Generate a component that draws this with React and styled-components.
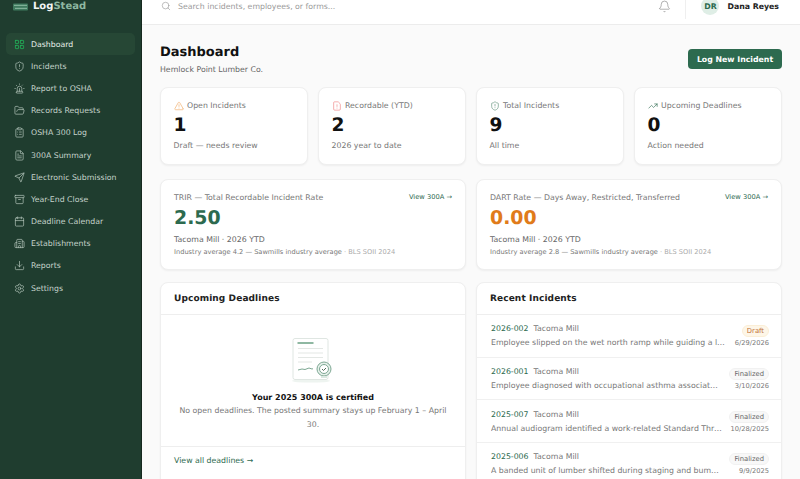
import React from "react";
import styled, { createGlobalStyle } from "styled-components";
import {
  LayoutGrid, ShieldAlert, Siren, FolderOpen, ClipboardList, FileText, Send, Archive,
  Calendar, Building2, Download, Settings, Search, Bell, TriangleAlert, FileWarning, TrendingUp,
} from "lucide-react";

const Global = createGlobalStyle`
  html, body { margin: 0; padding: 0; height: 100%; overflow: hidden; }
  body { font-family: "DejaVu Sans", sans-serif; background: #fafafa; color: #111; text-rendering: geometricPrecision; }
  * { box-sizing: border-box; }
`;

const Shell = styled.div`
  display: flex;
  width: 800px;
  height: 479px;
  overflow: hidden;
`;
const Sidebar = styled.aside`
  width: 142px;
  flex: none;
  background: #1f3d2f;
  border-right: 1px solid #16291f;
  display: flex;
  flex-direction: column;
`;
const Brand = styled.div`
  height: 25px;
  padding: 0 13px 12px;
  display: flex;
  align-items: center;
  gap: 5px;
  font-size: 10px;
  font-weight: 700;
  color: #f3f6f4;
`;
const BrandAccent = styled.span`
  color: #8fb8a2;
`;
const Nav = styled.nav`
  display: flex;
  flex-direction: column;
  padding: 8px 6px;
  gap: 0;
`;
const NavItem = styled.a`
  height: 22.2px;
  display: flex;
  align-items: center;
  gap: 6px;
  padding: 0 8px;
  border-radius: 5px;
  font-size: 7.8px;
  white-space: nowrap;
  color: ${(p) => (p.$active ? "#e6efe9" : "#c5d3cb")};
  background: ${(p) => (p.$active ? "#264735" : "transparent")};
  svg { color: ${(p) => (p.$active ? "#22c55e" : "#b6c7bd")}; flex: none; }
`;
const Main = styled.div`
  flex: 1;
  min-width: 0;
  display: flex;
  flex-direction: column;
`;
const Topbar = styled.header`
  height: 25px;
  flex: none;
  background: #fff;
  border-bottom: 1px solid #ececec;
  display: flex;
  align-items: center;
  padding: 0 21px 12px 19px;
  overflow: hidden;
  svg { flex: none; }
`;
const SearchText = styled.div`
  margin-left: 7px;
  flex: 1;
  font-size: 7.8px;
  color: #9a9a9a;
`;
const Divider = styled.div`
  width: 1px;
  height: 26px;
  background: #efefef;
  margin: 0 15px 0 14px;
`;
const Avatar = styled.div`
  width: 18px;
  height: 18px;
  border-radius: 50%;
  background: #dfeee6;
  color: #2d6a4f;
  font-size: 7.8px;
  font-weight: 700;
  display: flex;
  align-items: center;
  justify-content: center;
`;
const UserName = styled.div`
  margin-left: 8px;
  font-size: 7.8px;
  font-weight: 700;
  color: #222;
`;
const Content = styled.main`
  padding: 12px 18px 0;
  display: flex;
  flex-direction: column;
`;
const PageHead = styled.div`
  display: flex;
  justify-content: space-between;
  align-items: center;
  height: 44px;
  margin-bottom: 6px;
`;
const PageTitle = styled.h1`
  margin: 0 0 2px;
  font-size: 13px;
  line-height: 18px;
  font-weight: 700;
  color: #111;
`;
const PageSub = styled.div`
  font-size: 7.8px;
  line-height: 11px;
  color: #666;
`;
const PrimaryButton = styled.button`
  border: 0;
  height: 20px;
  width: 94px;
  border-radius: 4px;
  background: #2d6a4f;
  color: #fff;
  font: 700 7.8px "DejaVu Sans", sans-serif;
  padding: 0;
`;
const Stats = styled.div`
  display: grid;
  grid-template-columns: repeat(4, 148px);
  gap: 10px;
  margin-bottom: 14px;
`;
const Card = styled.section`
  background: #fff;
  border: 1px solid #efefef;
  border-radius: 8px;
  box-shadow: 0 1px 2px rgba(0, 0, 0, 0.05);
`;
const StatCard = styled(Card)`
  height: 78px;
  padding: 12px 12.5px;
`;
const StatLabel = styled.div`
  display: flex;
  align-items: center;
  gap: 3.5px;
  font-size: 7.8px;
  line-height: 11px;
  color: #777;
  svg { color: ${(p) => p.$tint}; flex: none; }
`;
const StatValue = styled.div`
  font-size: 18.6px;
  line-height: 22px;
  font-weight: 700;
  margin-top: 4px;
  color: #111;
`;
const StatNote = styled.div`
  font-size: 7.8px;
  line-height: 11px;
  margin-top: 3px;
  color: #777;
`;
const Rates = styled.div`
  display: grid;
  grid-template-columns: repeat(2, 306px);
  gap: 10px;
  margin-bottom: 12px;
`;
const RateCard = styled(Card)`
  height: 91px;
  padding: 12px 13px;
`;
const RateHead = styled.div`
  display: flex;
  justify-content: space-between;
  align-items: center;
  font-size: 7.8px;
  line-height: 11px;
  color: #777;
`;
const RateLink = styled.a`
  font-size: 6.7px;
  color: #2d6a4f;
`;
const RateValue = styled.div`
  font-size: 18.9px;
  line-height: 26px;
  font-weight: 700;
  margin-top: 2px;
  color: ${(p) => p.$color};
`;
const RateMeta = styled.div`
  font-size: 7.8px;
  line-height: 11px;
  margin-top: 3px;
  color: #666;
`;
const RateFoot = styled.div`
  font-size: 6.65px;
  line-height: 10px;
  margin-top: 2px;
  color: #777;
`;
const Muted = styled.span`
  color: #aaa;
`;
const Panels = styled.div`
  display: grid;
  grid-template-columns: repeat(2, 306px);
  gap: 10px;
`;
const Panel = styled(Card)`
  height: 240px;
  overflow: hidden;
`;
const PanelHead = styled.h2`
  margin: 0;
  height: 32px;
  padding: 0 13px;
  border-bottom: 1px solid #eee;
  display: flex;
  align-items: center;
  font-size: 9px;
  font-weight: 700;
  letter-spacing: 0.1px;
  color: #222;
`;
const Empty = styled.div`
  height: 132px;
  padding-top: 23px;
  border-bottom: 1px solid #eee;
  display: flex;
  flex-direction: column;
  align-items: center;
  text-align: center;
`;
const EmptyTitle = styled.div`
  font-size: 8px;
  line-height: 11px;
  font-weight: 700;
  margin-top: 6px;
  color: #111;
`;
const EmptyText = styled.div`
  font-size: 7.8px;
  line-height: 13.5px;
  margin-top: 1px;
  padding: 0 16px;
  color: #777;
`;
const PanelLink = styled.a`
  display: block;
  padding: 8px 13px;
  font-size: 7.8px;
  line-height: 11px;
  color: #2d6a4f;
`;
const Row = styled.div`
  height: 42.7px;
  padding: 1px 12px 0 14px;
  border-bottom: 1px solid #f0f0f0;
  display: flex;
  align-items: center;
  gap: 7px;
`;
const RowBody = styled.div`
  flex: 1;
  min-width: 0;
`;
const RowTop = styled.div`
  font-size: 7.8px;
  line-height: 11px;
  color: #777;
  margin-bottom: 3px;
`;
const RowId = styled.span`
  color: #2d6a4f;
  margin-right: 5px;
`;
const RowText = styled.div`
  font-size: 7.8px;
  line-height: 12px;
  color: #777;
  white-space: nowrap;
  overflow: hidden;
  text-overflow: ellipsis;
`;
const RowAside = styled.div`
  flex: none;
  padding-top: 2px;
  display: flex;
  flex-direction: column;
  align-items: flex-end;
  gap: 1px;
`;
const Badge = styled.span`
  font-size: 6.8px;
  line-height: 10px;
  padding: 0 4px;
  border-radius: 6px;
  border: 1px solid ${(p) => (p.$draft ? "#fbeed6" : "#f1f1f1")};
  color: ${(p) => (p.$draft ? "#c2733a" : "#666")};
  background: ${(p) => (p.$draft ? "#fdf6e8" : "#f8f8f8")};
`;
const RowDate = styled.span`
  font-size: 6.7px;
  line-height: 11px;
  color: #777;
`;

const LogoMark = () => (
  <svg width="15" height="8" viewBox="0 0 15 8" fill="none" aria-hidden="true">
    <rect x="0" y="0.5" width="15" height="7" rx="1" fill="#3f7a5e" />
    <rect x="1" y="1.800" width="13" height="1.200" fill="#7fb097" />
    <rect x="2" y="4.800" width="12" height="1.200" fill="#7fb097" />
  </svg>
);

const CertIllustration = () => (
  <svg width="44" height="48" viewBox="0 0 44 48" fill="none" aria-hidden="true">
    <ellipse cx="20" cy="43" rx="19" ry="1.600" fill="#eef4f0" />
    <rect x="2" y="0.500" width="35" height="41" rx="2" fill="#fff" stroke="#dfe6e2" />
    <rect x="6.500" y="4" width="16" height="2" fill="#8fb8a2" />
    <path d="M7 10.500h25M7 15h25M7 19.500h25M7 24h14" stroke="#e3e7e4" />
    <path d="M7 32l4-1 3 .5 4-1.500 3 1 1-.3" stroke="#7da893" />
    <circle cx="33" cy="31" r="7" fill="#e6f0eb" stroke="#7da893" />
    <circle cx="33" cy="31" r="4.500" fill="#fff" stroke="#7da893" />
    <path d="M31 31l1.500 1.500L35 30" stroke="#55705f" />
    <path d="M30 38h6v2h-6z" fill="#dbe8e1" />
  </svg>
);

const nav = [
  ["Dashboard", LayoutGrid],
  ["Incidents", ShieldAlert],
  ["Report to OSHA", Siren],
  ["Records Requests", FolderOpen],
  ["OSHA 300 Log", ClipboardList],
  ["300A Summary", FileText],
  ["Electronic Submission", Send],
  ["Year-End Close", Archive],
  ["Deadline Calendar", Calendar],
  ["Establishments", Building2],
  ["Reports", Download],
  ["Settings", Settings],
];

const stats = [
  ["Open Incidents", TriangleAlert, "#f0a860", "1", "Draft — needs review"],
  ["Recordable (YTD)", FileWarning, "#ef7f7f", "2", "2026 year to date"],
  ["Total Incidents", ShieldAlert, "#5d8f76", "9", "All time"],
  ["Upcoming Deadlines", TrendingUp, "#2d6a4f", "0", "Action needed"],
];

const rates = [
  ["TRIR — Total Recordable Incident Rate", "2.50", "#2d6a4f", "Industry average 4.2 — Sawmills industry average"],
  ["DART Rate — Days Away, Restricted, Transferred", "0.00", "#e07b1a", "Industry average 2.8 — Sawmills industry average"],
];

const incidents = [
  ["2026-002", "Employee slipped on the wet north ramp while guiding a lumber cart to the planer", "Draft", "6/29/2026"],
  ["2026-001", "Employee diagnosed with occupational asthma associated with wood dust exposure", "Finalized", "3/10/2026"],
  ["2025-007", "Annual audiogram identified a work-related Standard Threshold Shift in left ear", "Finalized", "10/28/2025"],
  ["2025-006", "A banded unit of lumber shifted during staging and bumped the employee shoulder", "Finalized", "9/9/2025"],
];

export default function App() {
  return (
    <Shell>
      <Global />
      <Sidebar>
        <Brand>
          <LogoMark />
          <span>Log<BrandAccent>Stead</BrandAccent></span>
        </Brand>
        <Nav>
          {nav.map(([label, Icon], i) => (
            <NavItem key={label} $active={i === 0}>
              <Icon size={11} strokeWidth={1.5} />
              {label}
            </NavItem>
          ))}
        </Nav>
      </Sidebar>
      <Main>
        <Topbar>
          <Search size={10} strokeWidth={1.5} color="#999" />
          <SearchText>Search incidents, employees, or forms...</SearchText>
          <Bell size={13} strokeWidth={1.2} color="#888" />
          <Divider />
          <Avatar>DR</Avatar>
          <UserName>Dana Reyes</UserName>
        </Topbar>
        <Content>
          <PageHead>
            <div>
              <PageTitle>Dashboard</PageTitle>
              <PageSub>Hemlock Point Lumber Co.</PageSub>
            </div>
            <PrimaryButton>Log New Incident</PrimaryButton>
          </PageHead>
          <Stats>
            {stats.map(([label, Icon, tint, value, note]) => (
              <StatCard key={label}>
                <StatLabel $tint={tint}><Icon size={10} strokeWidth={1.5} />{label}</StatLabel>
                <StatValue>{value}</StatValue>
                <StatNote>{note}</StatNote>
              </StatCard>
            ))}
          </Stats>
          <Rates>
            {rates.map(([title, value, color, foot]) => (
              <RateCard key={title}>
                <RateHead>{title}<RateLink>View 300A →</RateLink></RateHead>
                <RateValue $color={color}>{value}</RateValue>
                <RateMeta>Tacoma Mill · 2026 YTD</RateMeta>
                <RateFoot>{foot} <Muted>· BLS SOII 2024</Muted></RateFoot>
              </RateCard>
            ))}
          </Rates>
          <Panels>
            <Panel>
              <PanelHead>Upcoming Deadlines</PanelHead>
              <Empty>
                <CertIllustration />
                <EmptyTitle>Your 2025 300A is certified</EmptyTitle>
                <EmptyText>No open deadlines. The posted summary stays up February 1 – April 30.</EmptyText>
              </Empty>
              <PanelLink>View all deadlines →</PanelLink>
            </Panel>
            <Panel>
              <PanelHead>Recent Incidents</PanelHead>
              {incidents.map(([id, text, status, date]) => (
                <Row key={id}>
                  <RowBody>
                    <RowTop><RowId>{id}</RowId>Tacoma Mill</RowTop>
                    <RowText>{text}</RowText>
                  </RowBody>
                  <RowAside>
                    <Badge $draft={status === "Draft"}>{status}</Badge>
                    <RowDate>{date}</RowDate>
                  </RowAside>
                </Row>
              ))}
            </Panel>
          </Panels>
        </Content>
      </Main>
    </Shell>
  );
}
